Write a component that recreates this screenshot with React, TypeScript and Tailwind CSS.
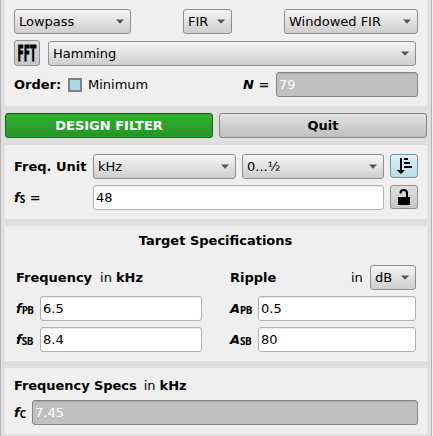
import React from "react";
import clsx from "clsx";

function Combo({ label, className }: { label: string; className: string }) {
  return (
    <button
      className={clsx(
        "flex h-[25px] shrink-0 items-center justify-between rounded-[3px] border border-[#909090] bg-linear-to-b from-[#f5f5f5] to-[#cecece] pl-1 pr-[6px] text-left",
        className,
      )}
    >
      <span>{label}</span>
      <svg width="8" height="5" viewBox="0 0 8 5" className="shrink-0">
        <path d="M0 0.5H8L4 4.7Z" fill="#555" />
      </svg>
    </button>
  );
}

function Field({ value, className, readOnly = false }: { value: string; className: string; readOnly?: boolean }) {
  return (
    <div
      className={clsx(
        "flex h-[25px] shrink-0 items-center rounded-[3px] border pl-[2px]",
        readOnly
          ? "border-[#868686] bg-[#c0c0c0] text-white shadow-[inset_0_1px_0_#aaaaaa]"
          : "border-[#b2b2b2] bg-white text-black shadow-[inset_0_1px_0_#ececec]",
        className,
      )}
    >
      {value}
    </div>
  );
}

function Quantity({ name, sub, suffix, className }: { name: string; sub: string; suffix?: string; className: string }) {
  return (
    <div className={clsx("flex shrink-0 items-center font-bold", className)}>
      <i>{name}</i>
      <span className="relative top-[2px] font-['Noto_Sans','DejaVu_Sans',sans-serif] text-[10px] tracking-[-0.5px]">
        {sub}
      </span>
      {suffix && <span className="ml-[5px]">{suffix}</span>}
    </div>
  );
}

function Spec({ name, sub, value, label, field }: { name: string; sub: string; value: string; label: string; field: string }) {
  return (
    <div className="flex">
      <Quantity name={name} sub={sub} className={label} />
      <Field value={value} className={field} />
    </div>
  );
}

const panel = "ml-[4px] w-[422px] shrink-0 bg-[#efefef]";

export default function App() {
  return (
    <div className="h-[436px] w-[433px] overflow-hidden bg-[#efefef] font-['DejaVu_Sans',sans-serif] text-[13px] leading-[15px] text-black">
      <main className="flex h-full w-[432px] flex-col border-x border-[#b3b3b3] bg-[#dfdfdf]">
        <section className={clsx(panel, "h-[106px] pl-[9px] pt-[9px]")}>
          <div className="flex">
            <Combo label="Lowpass" className="w-[117px]" />
            <Combo label="FIR" className="ml-[52px] w-[49px]" />
            <Combo label="Windowed FIR" className="ml-[52px] w-[134px]" />
          </div>
          <div className="mt-[6px] flex items-center">
            <button className="h-[26px] w-[26px] rounded-[3px] border border-[#909090] bg-linear-to-b from-[#dedede] to-[#c6c6c6]">
              <svg width="24" height="24" viewBox="0 0 24 24">
                <text
                  transform="translate(2.6 20) scale(0.435 1)"
                  fontSize="21"
                  fontWeight="700"
                  fontFamily="DejaVu Sans, sans-serif"
                  stroke="#000"
                  strokeWidth="0.8"
                >
                  FFT
                </text>
              </svg>
            </button>
            <Combo label="Hamming" className="ml-[8px] mt-px w-[368px]" />
          </div>
          <div className="mt-[6px] flex items-center">
            <span className="w-[54px] font-bold">Order:</span>
            <span className="h-[14px] w-[14px] border-2 border-[#808080] bg-[#add8e6]" />
            <span className="ml-[6px] w-[155px]">Minimum</span>
            <span className="w-[33px] whitespace-nowrap font-bold">
              <i>N</i> =
            </span>
            <Field value="79" readOnly className="w-[142px]" />
          </div>
        </section>

        <div className="ml-[4px] mt-[7px] flex gap-[6px] font-bold">
          <button className="h-[25px] w-[208px] rounded-[3px] border border-[#145f14] bg-linear-to-b from-[#2eb42e] to-[#279227] text-white shadow-[inset_0_0_0_1px_#31a731]">
            DESIGN FILTER
          </button>
          <button className="h-[25px] w-[208px] rounded-[3px] border border-[#858585] bg-linear-to-b from-[#e2e2e2] to-[#bfbfbf]">
            Quit
          </button>
        </div>

        <section className={clsx(panel, "mt-[7px] h-[74px] pl-[9px] pt-[9px]")}>
          <div className="flex">
            <span className="w-[79px] self-center font-bold">Freq. Unit</span>
            <Combo label="kHz" className="w-[143px]" />
            <Combo label="0...½" className="ml-[6px] w-[142px]" />
            <button className="ml-[6px] flex h-[24px] w-[28px] items-center justify-center rounded-[3px] border border-[#78929b] bg-linear-to-b from-[#daf2f9] to-[#bddce5]">
              <svg width="16" height="16" viewBox="0 0 16 16">
                <path d="M4 0H6V12H9L5 16L0.5 12H4ZM8 0H12V2H8ZM8 4H14V6H8ZM8 8H16V10H8Z" fill="#000" />
              </svg>
            </button>
          </div>
          <div className="mt-[6px] flex">
            <Quantity name="f" sub="S" suffix="=" className="w-[79px]" />
            <Field value="48" className="w-[291px]" />
            <button className="ml-[6px] flex h-[24px] w-[28px] items-center justify-center rounded-[3px] border border-[#909090] bg-linear-to-b from-[#dfdfdf] to-[#c7c7c7]">
              <svg width="14" height="16" viewBox="0 0 14 16">
                <path d="M3.5 4.5V4C3.5 0 10 0 10 4V9" fill="none" stroke="#000" strokeWidth="2" />
                <path d="M1 8H13V16H1Z" fill="#000" />
              </svg>
            </button>
          </div>
        </section>

        <section className={clsx(panel, "mt-[7px] h-[135px] pl-[11px] pt-[7px]")}>
          <h2 className="w-[399px] text-center font-bold">Target Specifications</h2>
          <div className="mt-[17px] flex">
            <div className="w-[214px]">
              <div className="flex h-[25px] items-center">
                <b>Frequency</b>
                <span className="ml-[8px]">in</span>
                <b className="ml-[4px]">kHz</b>
              </div>
              <div className="mt-[6px] flex flex-col gap-[6px]">
                <Spec name="f" sub="PB" value="6.5" label="w-[24px]" field="w-[162px]" />
                <Spec name="f" sub="SB" value="8.4" label="w-[24px]" field="w-[162px]" />
              </div>
            </div>
            <div className="w-[186px]">
              <div className="flex h-[25px] items-center">
                <b className="w-[121px]">Ripple</b>
                <span className="w-[19px]">in</span>
                <Combo label="dB" className="w-[46px]" />
              </div>
              <div className="mt-[6px] flex flex-col gap-[6px]">
                <Spec name="A" sub="PB" value="0.5" label="w-[28px]" field="w-[158px]" />
                <Spec name="A" sub="SB" value="80" label="w-[28px]" field="w-[158px]" />
              </div>
            </div>
          </div>
        </section>

        <section className={clsx(panel, "mt-[7px] h-[66px] pl-[9px] pt-[10px]")}>
          <h2 className="flex">
            <b className="tracking-[-0.06px]">Frequency Specs</b>
            <span className="ml-[7px]">in</span>
            <b className="ml-[4px]">kHz</b>
          </h2>
          <div className="mt-[7px] flex">
            <Quantity name="f" sub="C" className="w-[18px]" />
            <Field value="7.45" readOnly className="w-[386px]" />
          </div>
        </section>
      </main>
    </div>
  );
}
